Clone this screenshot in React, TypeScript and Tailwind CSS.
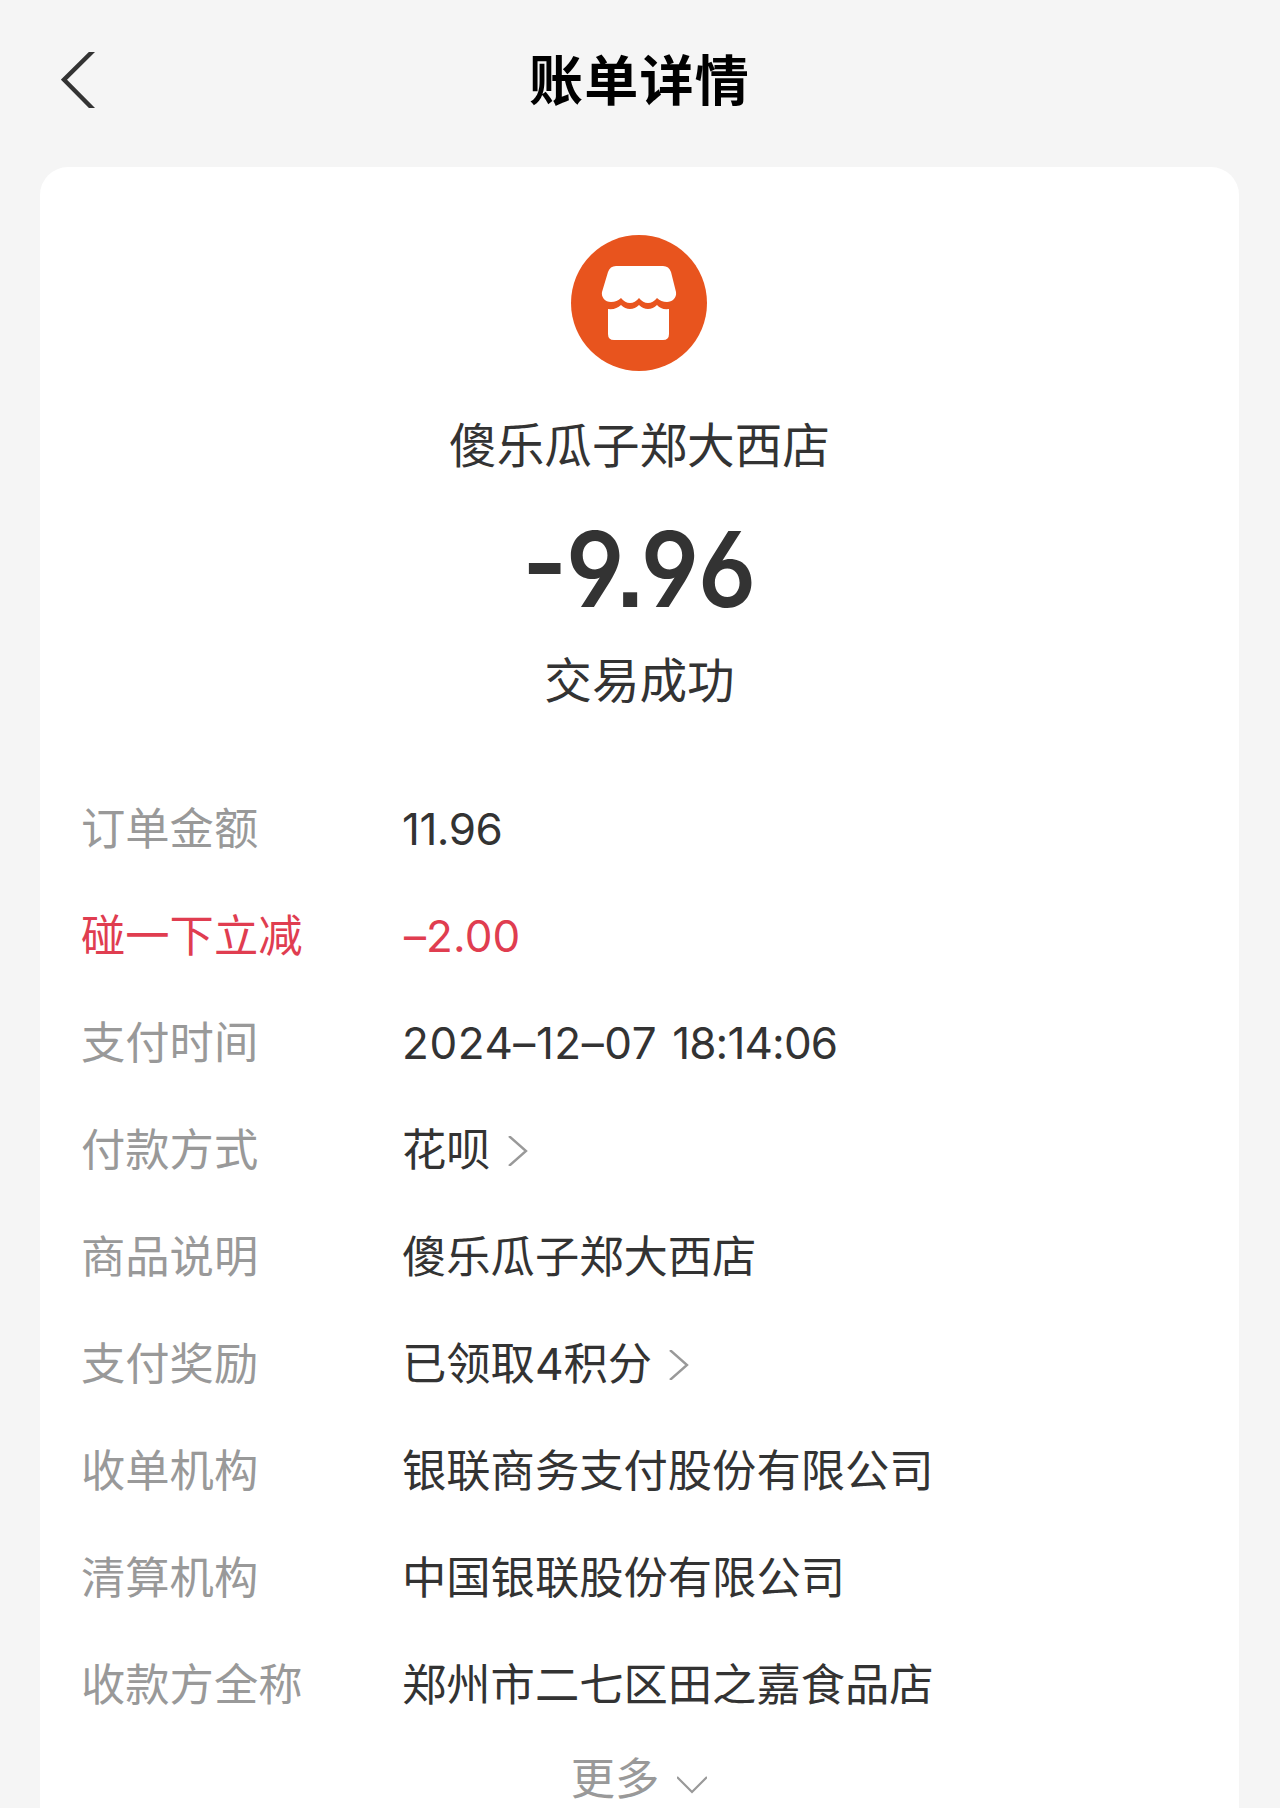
// src/pages/BillDetailPage.tsx
import React from 'react';

interface BillRow {
  label: string;
  value: React.ReactNode;
  highlight?: boolean;
  numeric?: boolean;
  link?: boolean;
}

const rows: BillRow[] = [
  { label: '订单金额', value: <span className="tracking-[-0.5px]">11.96</span>, numeric: true },
  { label: '碰一下立减', value: <span className="ml-[2px] tracking-[0.1px]">–2.00</span>, numeric: true, highlight: true },
  {
    label: '支付时间',
    value: (
      <>
        <span className="tracking-[0.55px]">2024–12–07</span>
        <span className="ml-[15px] tracking-[-0.85px]">18:14:06</span>
      </>
    ),
    numeric: true,
  },
  { label: '付款方式', value: '花呗', link: true },
  { label: '商品说明', value: '傻乐瓜子郑大西店' },
  { label: '支付奖励', value: '已领取4积分', link: true },
  { label: '收单机构', value: '银联商务支付股份有限公司' },
  { label: '清算机构', value: '中国银联股份有限公司' },
  { label: '收款方全称', value: '郑州市二七区田之嘉食品店' },
];

const BackIcon: React.FC = () => (
  <svg width="34" height="56" viewBox="0 0 34 56" fill="none" stroke="#333333" strokeWidth="4.4">
    <path d="M33 -2L3 27.7L33 58" />
  </svg>
);

const ShopIcon: React.FC = () => (
  <svg className="mr-[2px]" width="136" height="136" viewBox="0 0 136 136">
    <circle cx="68" cy="68" r="68" fill="#e8541e" />
    <path
      d="M45 31H92Q98 31 100 37L105 57C106 63 101 67 96 67Q90 67 86 63Q82 68 77 68Q72 68 68 63Q64 68 59 68Q54 68 50 63Q46 67 40 67C34 67 30 62 31 57L37 37Q39 31 45 31Z"
      fill="white"
    />
    <path
      d="M37 74Q45 75 50 70Q54 74 59 74Q64 74 68 70Q72 74 77 74Q82 74 86 70Q90 75 98 74V99Q98 105 92 105H43Q37 105 37 99Z"
      fill="white"
    />
  </svg>
);

const RightIcon: React.FC = () => (
  <svg className="ml-[17px] mt-[2px]" width="20" height="30" viewBox="0 0 20 30" fill="none" stroke="#999999" strokeWidth="2.4">
    <path d="M1 0L18 15L1 30" />
  </svg>
);

const DownIcon: React.FC = () => (
  <svg className="ml-[18px] mt-[12px]" width="30" height="18" viewBox="0 0 30 18" fill="none" stroke="#999999" strokeWidth="2.2">
    <path d="M0 1L15 16L30 1" />
  </svg>
);

const App: React.FC = () => {
  return (
    <div className="h-[1808px] w-[1280px] overflow-hidden bg-[#f5f5f5] font-['Inter','Noto_Sans_CJK_SC',sans-serif] text-[#333333]">
      <header className="grid h-[167px] grid-cols-[1fr_auto_1fr] items-start pr-[62px] pl-[61px] pt-[52px]">
        <BackIcon />
        <h1 className="pt-px text-[54px] leading-[58px] font-bold tracking-[1.2px] text-black">账单详情</h1>
      </header>

      <main className="mr-[41px] ml-[40px] flex h-[1800px] flex-col items-center rounded-[28px] bg-white pt-[68px]">
        <ShopIcon />
        <div className="mt-[41px] text-[47.6px] leading-[68px]">傻乐瓜子郑大西店</div>
        <div className="mt-[31px] flex h-[116px] scale-x-[0.92] items-center text-[105px] leading-[116px] font-semibold [font-feature-settings:'cv03','cv04','ss07']">
          -9.96
        </div>
        <div className="mt-[20px] text-[47.6px] leading-[68px]">交易成功</div>

        <div className="mt-[60px] w-full pl-[41px]">
          {rows.map((row) => (
            <div
              key={row.label}
              className={`flex h-[107px] items-center text-[44.3px] leading-[60px] ${row.highlight ? 'text-[#e03d50]' : ''}`}
            >
              <div className={`w-[321px] shrink-0 pt-px ${row.highlight ? '' : 'text-[#999999]'}`}>{row.label}</div>
              <div className={row.numeric ? 'flex text-[44px]' : 'pt-px'}>{row.value}</div>
              {row.link && <RightIcon />}
            </div>
          ))}
        </div>

        <div className="mt-[11px] flex items-center pr-px text-[44.3px] leading-[60px] text-[#999999]">
          更多
          <DownIcon />
        </div>
      </main>
    </div>
  );
};

export default App;
